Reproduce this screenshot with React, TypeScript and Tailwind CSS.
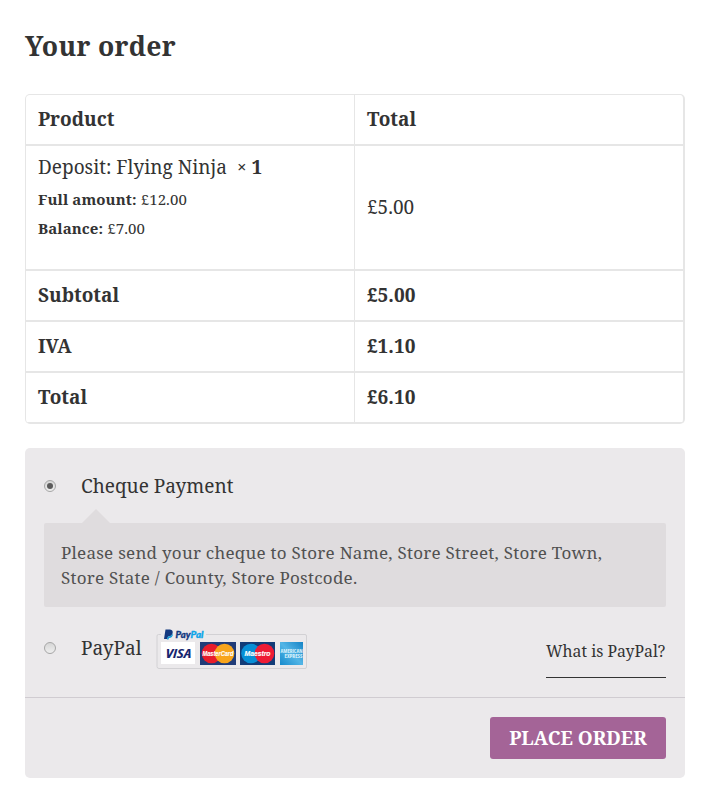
const heading = "font-bold text-[19px] leading-[26px] text-[#333333]";

function SummaryRow({ label, value }: { label: string; value: string }) {
  return (
    <div className={`flex h-[51px] border-b-2 border-[#e6e6e6] ${heading}`}>
      <div className="flex w-[329px] items-center border-r border-[#e6e6e6] pb-px pl-3">
        <span>{label}</span>
      </div>
      <div className="flex flex-1 items-center pb-px pl-3">
        <span>{value}</span>
      </div>
    </div>
  );
}

function Radio({ checked }: { checked?: boolean }) {
  return (
    <span className="flex size-3 items-center justify-center rounded-full border border-[#a6a6a6] bg-gradient-to-b from-[#d6d6d6] to-[#efefef]">
      {checked && <span className="size-1.5 rounded-full bg-[#5b5b5b]" />}
    </span>
  );
}

function CardLogos() {
  return (
    <svg width="152" height="42" viewBox="0 0 152 42" fontFamily="'Open Sans', sans-serif" fontWeight="700" fontStyle="italic">
      <path d="M5 6.5H2.5Q1 6.5 1 8V38.5Q1 40.5 3 40.5H149Q150.500 40.5 150.500 39V8Q150.500 6.500 149 6.500H50" fill="none" stroke="#d2d1d4" />
      <path d="M9.500 1.500H14Q17.500 2 16.500 5.500Q15.500 8.500 12 8.500L11.300 11H8Z" fill="#12387f" />
      <path d="M12 8.500Q15.500 8.500 16.500 5.500Q17.500 7 15.800 9Q15 10 13 10L12.500 11.500H10.800Z" fill="#159bd7" />
      <g fontFamily="Lato, sans-serif" fontWeight="900" fontSize="8.500">
        <text x="19.500" y="9.700" textLength="15" lengthAdjust="spacingAndGlyphs" fill="#12387f" stroke="#12387f" strokeWidth=".3">Pay</text>
        <text x="34.500" y="9.700" textLength="13" lengthAdjust="spacingAndGlyphs" fill="#0ca4e8" stroke="#0ca4e8" strokeWidth=".3">Pal</text>
      </g>
      <rect x="5" y="14" width="34" height="22" fill="#fff" />
      <text x="9.500" y="29.500" fontSize="12.500" fontWeight="700" textLength="26" lengthAdjust="spacingAndGlyphs" fill="#17266f">VISA</text>
      <rect x="44" y="14" width="36" height="23" fill="#203c78" />
      <circle cx="55.500" cy="25.500" r="9.800" fill="#e71d2b" />
      <circle cx="68.500" cy="25.500" r="9.800" fill="#f8a51c" />
      <text x="46.500" y="28" fontFamily="'Liberation Sans', sans-serif" fontSize="7.500" textLength="31" lengthAdjust="spacingAndGlyphs" fill="#fff" stroke="#fff" strokeWidth=".15">MasterCard</text>
      <rect x="84" y="14" width="35" height="23" fill="#123c78" />
      <circle cx="95" cy="25.500" r="9.800" fill="#078fd6" />
      <circle cx="108.500" cy="25.500" r="9.800" fill="#ee1c35" />
      <text x="88.500" y="28" fontFamily="'Liberation Sans', sans-serif" fontSize="7.500" textLength="26" lengthAdjust="spacingAndGlyphs" fill="#fff" stroke="#fff" strokeWidth=".15">Maestro</text>
      <defs>
        <linearGradient id="amex" x1="1" y1="0" x2="0" y2="1">
          <stop stopColor="#1583c5" />
          <stop offset=".5" stopColor="#52b5e6" />
          <stop offset="1" stopColor="#168acc" />
        </linearGradient>
      </defs>
      <rect x="124" y="14" width="23" height="23" fill="url(#amex)" />
      <text x="124.500" y="25" fontSize="5" fontStyle="normal" textLength="22" lengthAdjust="spacingAndGlyphs" fill="#d9f0fa">AMERICAN</text>
      <text x="128.500" y="30" fontSize="5" fontStyle="normal" textLength="18" lengthAdjust="spacingAndGlyphs" fill="#d9f0fa">EXPRESS</text>
    </svg>
  );
}

export default function App() {
  return (
    <main className="h-[800px] w-[706px] bg-white px-[25px] pt-[27px] font-['Noto_Serif','DejaVu_Serif_Condensed','DejaVu_Serif',serif] font-stretch-condensed text-[#333333]">
      <h1 className="h-[67px] text-[26.6px] leading-[38px] font-bold tracking-[0.3px]"><span>Your order</span></h1>

      <section className="w-[660px] overflow-hidden rounded-[5px] border-t border-r-2 border-l border-[#e6e6e6]">
        <SummaryRow label="Product" value="Total" />
        <div className="flex h-[125px] border-b-2 border-[#e6e6e6]">
          <div className="w-[329px] border-r border-[#e6e6e6] pt-[7px] pl-3">
            <div className="flex h-[28px] items-center text-[19px] leading-[26px]">
              <span>Deposit: Flying Ninja</span>
              <b className="ml-2.5 text-[17px]">×</b>
              <b className="ml-[5px]">1</b>
            </div>
            <div className="mt-[3.5px] text-[15px] leading-[29px] tracking-[0.1px]">
              <div><b>Full amount:</b> <span>£12.00</span></div>
              <div><b>Balance:</b> <span>£7.00</span></div>
            </div>
          </div>
          <div className="flex flex-1 items-center pb-px pl-3 text-[19px] leading-[26px]"><span>£5.00</span></div>
        </div>
        <SummaryRow label="Subtotal" value="£5.00" />
        <SummaryRow label="IVA" value="£1.10" />
        <SummaryRow label="Total" value="£6.10" />
      </section>

      <section className="mt-6 flex h-[330px] w-[660px] flex-col rounded-[5px] bg-[#ebe9eb]">
        <div className="h-[249px] px-[19px] pt-6">
          <div className="flex h-[28px] items-center text-[19px] leading-7">
            <Radio checked />
            <span className="ml-[25px]">Cheque Payment</span>
          </div>
          <svg className="mt-[9px] ml-[38px] block" width="28" height="14" viewBox="0 0 28 14">
            <path d="M0 14L14 0L28 14Z" fill="#dfdcde" />
          </svg>
          <p className="h-[84px] rounded-[2px] bg-[#dfdcde] pt-[17px] pl-[17px] text-[17px] leading-[25px] tracking-[0.25px] text-[#515151]">
            <span>Please send your cheque to Store Name, Store Street, Store Town,</span>
            <br />
            <span>Store State / County, Store Postcode.</span>
          </p>
          <div className="flex h-[82px] items-center text-[19px] leading-7">
            <Radio />
            <span className="w-[75px] pl-[25px] whitespace-nowrap">PayPal</span>
            <span className="mt-px ml-[25px]"><CardLogos /></span>
            <a className="mt-[12px] ml-auto h-[47px] w-[120px] border-b border-[#333333] text-[15.8px] leading-[40px] whitespace-nowrap">What is PayPal?</a>
          </div>
        </div>
        <div className="flex flex-1 justify-end border-t border-[#d0ccd1] pt-[19px] pr-[19px]">
          <button className="h-[42px] w-[176px] rounded-[3px] bg-[#a46497] text-[19px] leading-[26px] font-bold whitespace-nowrap text-white">PLACE ORDER</button>
        </div>
      </section>
    </main>
  );
}
